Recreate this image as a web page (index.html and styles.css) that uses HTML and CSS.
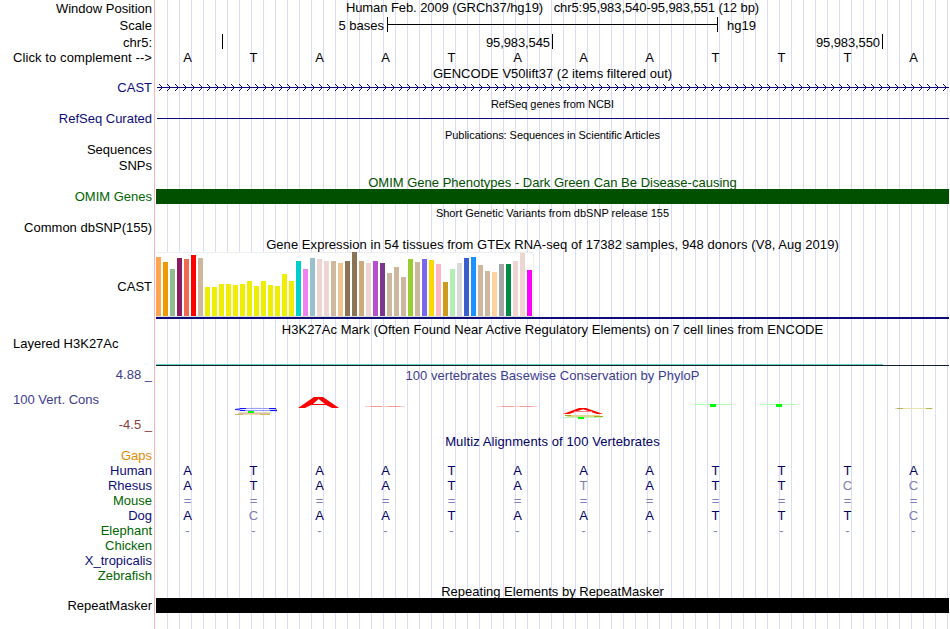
FILE: index.html
```html
<!DOCTYPE html>
<html lang="en">
<head>
    <meta charset="UTF-8">
    <title>Human chr5:95,983,540-95,983,551 - Genome Browser</title>
    <link rel="stylesheet" href="styles.css">
</head>
<body>
    <div class="browser">
        <div class="row ruler"><div class="label">Window Position</div><div class="data"><span class="title position">Human Feb. 2009 (GRCh37/hg19) &nbsp; chr5:95,983,540-95,983,551 (12 bp)</span></div></div>
        <div class="row ruler"><div class="label">Scale</div><div class="data scale"><span class="bases-text">5 bases</span><div class="scale-bar"></div><span>hg19</span></div></div>
        <div class="row chrom"><div class="label">chr5:</div><div class="data ticks"><div class="tick first"></div><div class="tick">95,983,545</div><div class="tick">95,983,550</div></div></div>
        <div class="row complement"><div class="label">Click to complement --&gt;</div><div class="data bases" data-seq="ATAATAAATTTA"></div></div>

        <div class="row heading gencode-title"><div class="data"><span class="title gencode">GENCODE V50lift37 (2 items filtered out)</span></div></div>
        <div class="row navy"><div class="label">CAST</div><div class="data">
            <svg class="gene" width="793" height="15">
                <defs><pattern id="arrows" x="3" y="0" width="8" height="15" patternUnits="userSpaceOnUse"><path d="M0 4h1v1h-1zM1 5h1v1h-1zM2 6h1v1h-1zM3 7h1v1h-1zM2 8h1v1h-1zM1 9h1v1h-1zM0 10h1v1h-1z" fill="#0c0c78"/></pattern></defs>
                <rect x="1" width="792" height="15" fill="url(#arrows)"/>
                <rect x="1" y="7" width="792" height="1" fill="#0c0c78"/>
            </svg>
        </div></div>
        <div class="row heading small refseq-title"><div class="data"><span class="title refseq">RefSeq genes from NCBI</span></div></div>
        <div class="row navy"><div class="label">RefSeq Curated</div><div class="data"><div class="line"></div></div></div>
        <div class="row heading small pubs-title"><div class="data"><span class="title pubs">Publications: Sequences in Scientific Articles</span></div></div>
        <div class="row sequences"><div class="label">Sequences</div></div>
        <div class="row snps"><div class="label">SNPs</div></div>
        <div class="row heading omim-title"><div class="data"><span class="title omim">OMIM Gene Phenotypes - Dark Green Can Be Disease-causing</span></div></div>
        <div class="row green"><div class="label">OMIM Genes</div><div class="data block omim-block"></div></div>
        <div class="row heading small dbsnp-title"><div class="data"><span class="title dbsnp">Short Genetic Variants from dbSNP release 155</span></div></div>
        <div class="row"><div class="label">Common dbSNP(155)</div></div>
        <div class="row heading gtex-title"><div class="data"><span class="title gtex">Gene Expression in 54 tissues from GTEx RNA-seq of 17382 samples, 948 donors (V8, Aug 2019)</span></div></div>
        <div class="row gtex-row"><div class="label">CAST</div><div class="data gtex-data"><div class="chart" id="chart"></div></div></div>

        <div class="row heading h3k-title"><div class="data"><span class="title h3k">H3K27Ac Mark (Often Found Near Active Regulatory Elements) on 7 cell lines from ENCODE</span></div></div>
        <div class="row h3k-row"><div class="label left">Layered H3K27Ac</div><div class="data signal"><div class="teal"></div><div class="dark"></div></div></div>

        <div class="row cons">
            <div class="label cons-labels"><span class="max">4.88 _</span><span class="name">100 Vert. Cons</span><span class="min">-4.5 _</span></div>
            <div class="data">
                <div class="cons-heading"><span class="title phylop">100 vertebrates Basewise Conservation by PhyloP</span></div>
                <svg class="logo" width="793" height="40" viewBox="156 384 793 40">
                    <!-- base 2 -->
                    <path d="M277 409.5C270 408 242 408 235 409.5C242 411.5 260 410 277 410.8" fill="none" stroke="#9292ff"/>
                    <path d="M235 409.5L240 409M240 410.5H245M240 408.5H246M269 408.5H276M270 410.5H277" stroke="#1414ff"/>
                    <path d="M239 412.5H272" stroke="#cfe8c0"/>
                    <path d="M238 413.5H270" stroke="#f5b5a0"/>
                    <path d="M235 414.5H243M260 414.5H270" stroke="#c5bd62"/>
                    <path d="M243 414.5H260" stroke="#e8dfb0"/>
                    <rect x="248" y="411" width="6" height="2" fill="#00ff00"/>
                    <!-- base 3 -->
                    <path fill-rule="evenodd" d="M298 408L314 397H323L339 408H332L326 405H311L305 408ZM313 404H325L318.500 399Z" fill="#ff0000"/>
                    <!-- bases 4 and 6 -->
                    <path d="M365 406.500H405M497 406.500H537" stroke="#ffcbcb"/>
                    <path d="M370 406.500H382M388 406.500H400M502 406.500H514M520 406.500H532" stroke="#f99a9a"/>
                    <!-- base 7 -->
                    <path d="M563 414L579 408H586L603 414H597L583 409.200L569 414Z" fill="#ff0000"/>
                    <path d="M574 411.500H592" stroke="#ff8080"/>
                    <path d="M565 415.500H600M567 416.500H602" stroke="#e1d891"/>
                    <path d="M565 415.500H571M594 416.500H603" stroke="#aaa51e"/>
                    <path d="M563 417.500H602" stroke="#b8f8b8"/>
                    <rect x="578" y="417" width="6" height="2" fill="#00ff00"/>
                    <!-- bases 9 and 10 -->
                    <path d="M694 404.500H731M760 404.500H797" stroke="#b0ffb0"/>
                    <path d="M710 405.500H716M776 405.500H782" stroke="#00ff00" stroke-width="3"/>
                    <!-- base 12 -->
                    <path d="M895 408.500H933" stroke="#e5e1b3"/>
                    <path d="M897 408.500H903M926 408.500H932" stroke="#b7af50"/>
                </svg>
            </div>
        </div>

        <div class="row heading multiz-title"><div class="data"><span class="title multiz">Multiz Alignments of 100 Vertebrates</span></div></div>
        <div class="row gaps"><div class="label">Gaps</div></div>
        <div class="row navy species"><div class="label">Human</div><div class="data bases" data-seq="ATAATAAATTTA"></div></div>
        <div class="row navy species"><div class="label">Rhesus</div><div class="data bases" data-seq="ATAATAtATTcc"></div></div>
        <div class="row green species"><div class="label">Mouse</div><div class="data bases" data-seq="============"></div></div>
        <div class="row navy species"><div class="label">Dog</div><div class="data bases" data-seq="AcAATAAATTTc"></div></div>
        <div class="row green species"><div class="label">Elephant</div><div class="data bases" data-seq="------------"></div></div>
        <div class="row green species"><div class="label">Chicken</div></div>
        <div class="row navy species"><div class="label">X_tropicalis</div></div>
        <div class="row green species"><div class="label">Zebrafish</div></div>
        <div class="row heading rmsk-title"><div class="data"><span class="title rmsk">Repeating Elements by RepeatMasker</span></div></div>
        <div class="row"><div class="label">RepeatMasker</div><div class="data block rmsk-block"></div></div>
    </div>

    <script>
        // Lower case bases differ from the human one and are drawn faded
        document.querySelectorAll('.bases').forEach(row => {
            row.dataset.seq.split('').forEach(base => {
                const cell = document.createElement('span');
                cell.textContent = base.toUpperCase();
                if (/[^A-Z]/.test(base)) cell.className = 'faded';
                row.appendChild(cell);
            });
        });

        // GTEx tissues: [colour, height]
        const tissues = [
            ['#ffa54f', 59], ['#ee9a00', 54], ['#8fbc8f', 47], ['#8b1c62', 58], ['#ee6a50', 57], ['#ff0000', 61], ['#cdb79e', 58],
            ['#eeee00', 29], ['#eeee00', 29], ['#eeee00', 32], ['#eeee00', 32], ['#eeee00', 31], ['#eeee00', 32], ['#eeee00', 35],
            ['#eeee00', 30], ['#eeee00', 35], ['#eeee00', 31], ['#eeee00', 30], ['#eeee00', 42], ['#eeee00', 35],
            ['#00cdcd', 55], ['#ee82ee', 47], ['#9ac0cd', 58], ['#eed5d2', 57], ['#eed5d2', 55], ['#cdb79e', 55], ['#eec591', 53],
            ['#8b7355', 55], ['#8b7355', 64], ['#cdaa7d', 55], ['#eed5d2', 53], ['#b452cd', 55], ['#7a378b', 53],
            ['#cdb79e', 43], ['#cdb79e', 49], ['#cdb79e', 39], ['#9acd32', 57], ['#cdb79e', 54], ['#7a67ee', 57], ['#ffd700', 56],
            ['#ffb6c1', 52], ['#cd9b1d', 34], ['#b4eeb4', 47], ['#d9d9d9', 53], ['#3a5fcd', 58], ['#1e90ff', 59],
            ['#cdb79e', 51], ['#cdb79e', 45], ['#ffd39b', 44], ['#a6a6a6', 52], ['#008b45', 52], ['#eed5d2', 55], ['#eed5d2', 63], ['#ff00ff', 46]
        ];
        const chart = document.getElementById('chart');
        tissues.forEach(([color, height]) => {
            const bar = document.createElement('div');
            bar.className = 'bar';
            bar.style.height = height + 'px';
            bar.style.background = color;
            chart.appendChild(bar);
        });
    </script>
</body>
</html>
```
FILE: styles.css
```css
body { margin: 0; background: #fff; color: #000; font: 13px/15px "Liberation Sans", Arial, sans-serif; }
.browser {
    width: 949px; height: 629px; overflow: hidden;
    background:
        linear-gradient(#ffb4b4, #ffb4b4) 154px 0 / 1px 100% no-repeat,
        linear-gradient(#fff, #fff) 0 0 / 156px 100% no-repeat,
        linear-gradient(to right, #dcdcf8 1px, transparent 1px) 167px 0 / 12px 100%;
}
.row { display: flex; height: 15px; }
.label { width: 152px; margin-right: 4px; text-align: right; white-space: pre; flex: none; }
.label.left { width: 139px; padding-left: 13px; text-align: left; line-height: 13px; }
.data { width: 793px; flex: none; white-space: nowrap; }
.heading { padding-left: 156px; text-align: center; }
.small { font-size: 11px; }
.navy { color: #0c0c78; }
.green { color: #006400; }
.block { height: 15px; }

.position { letter-spacing: -0.08px; }
.gencode { letter-spacing: 0.02px; }
.refseq { letter-spacing: -0.04px; }
.pubs { letter-spacing: -0.06px; }
.gtex { letter-spacing: 0.06px; }
.h3k, .phylop { letter-spacing: 0.045px; }
.multiz { letter-spacing: 0.1px; }

.ruler { height: 17px; line-height: 17px; text-align: center; }
.ruler .title { line-height: 15px; vertical-align: top; }
.scale { display: flex; }
.bases-text { width: 228px; margin-right: 3px; text-align: right; }
.scale-bar { width: 329px; height: 15px; margin-right: 9px; border: solid #000; border-width: 0 1px; background: linear-gradient(#000, #000) 0 7px / 100% 1px no-repeat; }
.chrom { height: 16px; line-height: 17px; }
.ticks { display: flex; }
.tick { box-sizing: border-box; width: 330px; height: 15px; padding-right: 2px; border-right: 1px solid #000; text-align: right; letter-spacing: -0.1px; }
.tick.first { width: 67px; }
.complement { height: 16px; }
.complement .label { letter-spacing: 0.09px; }

.bases { display: grid; grid-template-columns: repeat(12, 66px); text-align: center; margin-left: -1px; }
.bases span { width: 65px; }
.species .bases { color: #000064; }
.species .bases .faded { color: #8080b4; }

.gencode-title { height: 14px; }
.gene { display: block; }
.refseq-title { height: 15px; padding-top: 2px; }
.refseq-title + .row { margin-top: -1px; }
.line { height: 1px; margin: 7px 0 0 1px; background: #0c0c78; }
.pubs-title { margin-top: 2px; height: 14px; }
.sequences { height: 16px; }
.omim-title { margin-top: 2px; height: 14px; color: #005000; }
.omim-block { background: #005000; }
.dbsnp-title { margin-top: 2px; height: 14px; }
.gtex-title { margin-top: 2px; }
.gtex-row { height: 67px; }
.gtex-row .label { line-height: 69px; }
.gtex-data { border-bottom: 2px solid #0c0c78; height: 65px; }
.chart { display: flex; align-items: flex-end; gap: 2px; box-sizing: border-box; width: 378px; height: 65px; background: linear-gradient(#eee, #eee) 0 0 / 100% 1px no-repeat, #fff; border-right: 1px solid #eee; border-bottom: 1px solid #ddd; }
.bar { width: 5px; flex: none; }

.h3k-title { margin-top: 3px; }
.h3k-row { height: 31px; }
.signal { padding-top: 27px; }
.teal { width: 727px; height: 1px; background: #64d2be; }
.dark { height: 1px; background: #141e32; }

.cons { height: 66px; color: #3c3c8c; }
.cons-labels { display: flex; flex-direction: column; margin-top: -1px; }
.cons-labels .name { margin: 10px 0; padding-left: 13px; text-align: left; }
.cons-labels .min { color: #8c3c3c; }
.cons-heading { height: 16px; text-align: center; }
.logo { display: block; }
.multiz-title { height: 14px; color: #000064; }
.gaps { color: #e68a00; }
.rmsk-title { margin-top: 1px; height: 14px; }
.rmsk-block { background: #000; }
```
